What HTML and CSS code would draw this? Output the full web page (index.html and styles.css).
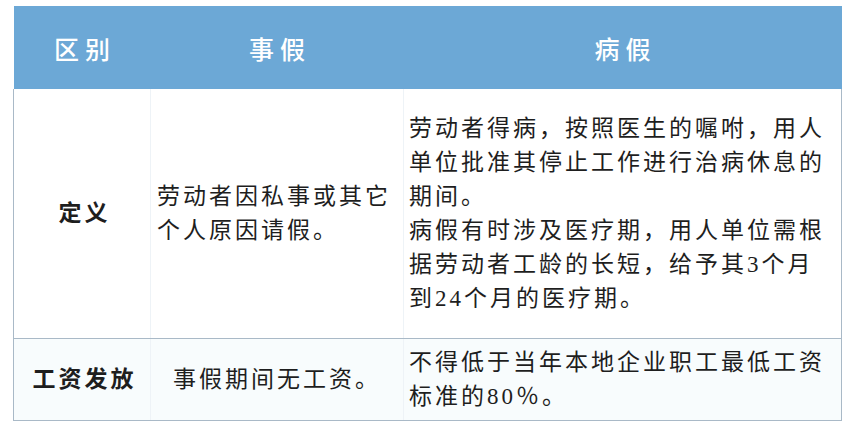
FILE: index.html
```html
<!DOCTYPE html>
<html lang="zh-CN">
<head>
<meta charset="utf-8">
<title>事假与病假区别</title>
<link rel="stylesheet" href="styles.css">
</head>
<body>
<div class="wrap">
  <table class="cmp">
    <colgroup>
      <col class="c1">
      <col class="c2">
      <col class="c3">
    </colgroup>
    <thead>
      <tr>
        <th>区别</th>
        <th>事假</th>
        <th>病假</th>
      </tr>
    </thead>
    <tbody>
      <tr class="r1">
        <td class="label">定义</td>
        <td class="left">劳动者因私事或其它个人原因请假。</td>
        <td class="left wide">劳动者得病，按照医生的嘱咐，用人单位批准其停止工作进行治病休息的期间。<br>病假有时涉及医疗期，用人单位需根据劳动者工龄的长短，给予其3个月<br>到24个月的医疗期。</td>
      </tr>
      <tr class="r2">
        <td class="label">工资发放</td>
        <td class="center">事假期间无工资。</td>
        <td class="left wide">不得低于当年本地企业职工最低工资标准的80％。</td>
      </tr>
    </tbody>
  </table>
</div>
</body>
</html>
```

FILE: styles.css
```css
html, body {
  margin: 0;
  padding: 0;
  background: #ffffff;
}

.wrap {
  padding: 6px 0 0 13px;
}

.cmp {
  border-collapse: collapse;
  table-layout: fixed;
  width: 828px;
  font-family: "Liberation Serif", "Noto Sans CJK SC", serif;
  color: #1e1e1e;
}

.c1 { width: 137px; }
.c2 { width: 253px; }
.c3 { width: 438px; }

.cmp th {
  background: #6ca8d6;
  color: #ffffff;
  height: 83px;
  padding: 0;
  font-size: 25px;
  font-weight: 500;
  letter-spacing: 6px;
  text-indent: 6px;
  text-align: center;
  vertical-align: middle;
  line-height: 1;
  padding-top: 5px;
  box-sizing: border-box;
}

.cmp td {
  font-size: 23px;
  line-height: 34px;
  letter-spacing: 3px;
  vertical-align: middle;
  border-left: 1px solid #eef3f7;
  border-bottom: 1px solid #a9b9c7;
  padding: 0;
}

.cmp td:first-child {
  border-left: 1px solid #a9b9c7;
}

.cmp td.wide {
  border-right: 1px solid #a9b9c7;
}

.r1 td { height: 249px; }
.r2 td { height: 81px; background: #f8fcfd; }

.label {
  font-weight: 700;
  text-align: center;
  letter-spacing: 5px;
  text-indent: 5px;
}

.left {
  text-align: left;
  padding-left: 6px !important;
}

.wide {
  padding-left: 5px !important;
}

.center {
  text-align: center;
  text-indent: 0;
}
```
